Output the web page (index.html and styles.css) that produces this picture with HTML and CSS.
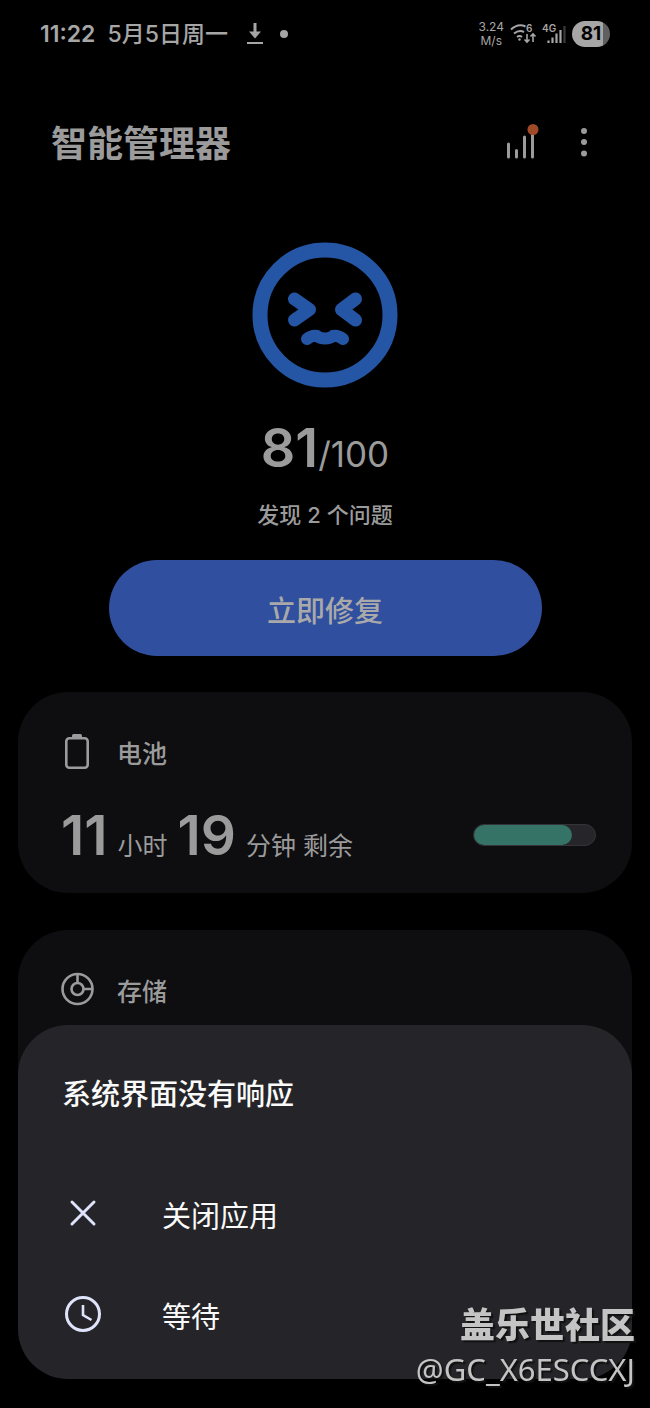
FILE: index.html
```html
<!DOCTYPE html>
<html lang="zh-CN">
<head>
    <meta charset="UTF-8">
    <meta name="viewport" content="width=device-width, initial-scale=1">
    <title>智能管理器</title>
    <link rel="stylesheet" href="styles.css">
</head>
<body>

<!-- 状态栏 -->
<div class="status-bar">
    <div class="status-left">
        <span class="clock">11:22</span>
        <span class="date">5月5日周一</span>
        <svg class="download" width="18" height="24" viewBox="0 0 18 24">
            <path d="M9 1v10" stroke="currentColor" stroke-width="3"/>
            <path d="M3 9.500h12L9 16.500z" fill="currentColor"/>
            <path d="M1 21h16" stroke="currentColor" stroke-width="2"/>
        </svg>
        <span class="dot"></span>
    </div>
    <div class="status-right">
        <div class="speed">3.24<br>M/s</div>
        <svg width="26" height="24" viewBox="0 0 26 24" fill="none" stroke="currentColor" stroke-width="2">
            <path d="M1 7.500Q8 1 15.500 4.500M4 11.500Q9 7.500 14 10M7 15Q9.500 13 12 15"/>
            <circle cx="9.500" cy="17.500" r="1.200" fill="currentColor" stroke="none"/>
            <path d="M17 12v8M14.500 17.500l2.500 2.500 2.500-2.500M23 20v-8M20.500 14.500L23 12l2.500 2.500" stroke-width="1.600"/>
            <text class="tiny" x="16" y="10">6</text>
        </svg>
        <svg width="24" height="26" viewBox="0 0 24 26" fill="none" stroke="currentColor" stroke-width="2.200">
            <text class="tiny" x="0" y="11">4G</text>
            <path d="M6.500 19.500V22M10.500 16.500V22M14.500 12.500V22M18.500 9v13"/>
            <path d="M22.500 5v17" opacity=".35"/>
        </svg>
        <div class="battery-pill">81</div>
    </div>
</div>

<!-- 标题 -->
<header class="header">
    <h1>智能管理器</h1>
    <div class="actions">
        <button class="icon-button" aria-label="使用统计">
            <svg width="34" height="42" viewBox="0 0 34 42">
                <path d="M3.500 21v13M11.500 27.500V34M19.500 14v20M27.500 12v22" stroke="currentColor" stroke-width="3" stroke-linecap="round"/>
                <circle cx="28" cy="6.500" r="5.500" fill="#a04a28"/>
            </svg>
        </button>
        <button class="icon-button" aria-label="更多选项">
            <svg width="10" height="42" viewBox="0 0 10 42" fill="currentColor">
                <circle cx="5" cy="8" r="3"/>
                <circle cx="5" cy="19" r="3"/>
                <circle cx="5" cy="30.500" r="3"/>
            </svg>
        </button>
    </div>
</header>

<main>
    <!-- 总评分 -->
    <section class="score">
        <svg width="146" height="146" viewBox="0 0 146 146" fill="none" stroke="#2556a5" stroke-linecap="round" stroke-linejoin="round">
            <circle cx="73" cy="73" r="65" stroke-width="15"/>
            <path d="M42.500 57L57.500 67.500 42.500 78M103.500 57L89.500 67.500l14 10.500" stroke-width="13"/>
            <path d="M55 97q5-4 10-3 3 2.500 8 2.500t8-2.500q5-1 10 3" stroke-width="12"/>
        </svg>
        <div class="points"><strong>81</strong><span>/100</span></div>
        <p>发现 2 个问题</p>
        <button class="fix-button">立即修复</button>
    </section>

    <!-- 电池 -->
    <section class="card">
        <h2>
            <svg width="34" height="38" viewBox="0 0 34 38" fill="none" stroke="currentColor">
                <rect x="5.300" y="6.300" width="21.400" height="29.400" rx="3" stroke-width="2.600"/>
                <path d="M11 6V3.500q0-1.500 1.500-1.500h7q1.500 0 1.500 1.500V6z" fill="currentColor" stroke="none"/>
            </svg>
            <span>电池</span>
        </h2>
        <div class="card-row">
            <div class="remaining">
                <strong>11</strong><span>小时</span><strong>19</strong><span>分钟 剩余</span>
            </div>
            <div class="level"><div class="level-fill" style="width: 81%"></div></div>
        </div>
    </section>

    <!-- 存储 -->
    <section class="card">
        <h2>
            <svg width="34" height="38" viewBox="0 0 34 38" fill="none" stroke="currentColor" stroke-width="2.600">
                <circle cx="16.500" cy="19" r="15"/>
                <circle cx="16.500" cy="19" r="6"/>
                <path d="M16.500 4v9M22.500 19h9"/>
            </svg>
            <span>存储</span>
        </h2>
    </section>
</main>

<!-- 无响应对话框 -->
<div class="dialog" role="dialog" aria-labelledby="dialog-title">
    <h2 id="dialog-title">系统界面没有响应</h2>
    <button class="dialog-option">
        <svg width="40" height="38" viewBox="0 0 40 38" fill="none" stroke="#dfe3fb" stroke-width="3" stroke-linecap="round">
            <path d="M10 7l22 22M32 7L10 29"/>
        </svg>
        关闭应用
    </button>
    <button class="dialog-option">
        <svg width="40" height="38" viewBox="0 0 40 38" fill="none" stroke="#dfe3fb" stroke-width="3">
            <circle cx="21" cy="18" r="16.500"/>
            <path d="M21 9v10l8.500 5" stroke-width="2.600"/>
        </svg>
        等待
    </button>
</div>

<div class="watermark">
    <strong>盖乐世社区</strong>
    <span>@GC_X6ESCCXJ</span>
</div>

</body>
</html>
```
FILE: styles.css
```css
* {
    box-sizing: border-box;
}
body {
    margin: 0;
    min-height: 100vh;
    background: #000;
    color: #9b9b9b;
    font-family: Inter, "Noto Sans CJK SC", sans-serif;
}
h1, h2, p {
    margin: 0;
}
button {
    padding: 0;
    border: none;
    background: none;
    color: inherit;
    font-family: inherit;
    cursor: pointer;
}
svg {
    display: block;
    flex: none;
    overflow: visible;
}

/* Status bar */
.status-bar {
    display: flex;
    justify-content: space-between;
    align-items: center;
    height: 68px;
    padding: 0 40px;
    color: #a6a6a6;
}
.status-left,
.status-right {
    display: flex;
    align-items: center;
}
.status-left {
    gap: 12px;
    font-size: 23px;
    font-weight: 600;
    line-height: 28px;
}
.date {
    font-weight: 500;
}
.download {
    margin-left: 6px;
}
.dot {
    width: 8px;
    height: 8px;
    margin-left: 4px;
    border-radius: 50%;
    background: #a6a6a6;
}
.status-right {
    gap: 6px;
}
.speed {
    font-size: 12px;
    line-height: 14px;
    text-align: center;
}
.tiny {
    font-size: 10px;
    font-weight: 600;
    fill: currentColor;
    stroke: none;
}
.battery-pill {
    width: 38px;
    border-radius: 13px;
    background: linear-gradient(90deg, #a6a6a6 81%, #606060 81%);
    color: #000;
    font-size: 19px;
    font-weight: 700;
    line-height: 26px;
    text-align: center;
}

/* Header */
.header {
    display: flex;
    justify-content: space-between;
    align-items: center;
    height: 152px;
    padding: 0 61px 0 51px;
}
.header h1 {
    font-size: 36px;
    font-weight: 700;
    line-height: 48px;
}
.actions {
    display: flex;
    gap: 40px;
}

/* Score */
.score {
    display: flex;
    flex-direction: column;
    align-items: center;
    padding: 22px 0 36px;
}
.points {
    margin-top: 28px;
    line-height: 64px;
    white-space: nowrap;
}
.points strong {
    font-size: 54px;
    font-weight: 600;
}
.points span {
    font-size: 35px;
    font-weight: 400;
}
.score p {
    margin-top: 6px;
    font-size: 22px;
    font-weight: 500;
    line-height: 32px;
}
.fix-button {
    width: calc(66% + 4px);
    height: 96px;
    margin-top: 29px;
    padding-top: 2px;
    border-radius: 48px;
    background: #304f9f;
    color: #a9a9a9;
    font-size: 29px;
    font-weight: 500;
}

/* Cards */
.card {
    min-height: 201px;
    margin: 0 18px 37px;
    padding: 40px 36px 0 43px;
    border-radius: 50px;
    background: #0e0e11;
}
.card h2 {
    display: flex;
    align-items: center;
    gap: 22px;
    font-size: 25px;
    font-weight: 500;
    line-height: 32px;
}
.card h2 span {
    padding-top: 6px;
}
.card-row {
    display: flex;
    justify-content: space-between;
    align-items: center;
    margin-top: 32px;
}
.remaining {
    display: flex;
    align-items: baseline;
    gap: 10px;
    font-size: 25px;
    font-weight: 400;
    line-height: 66px;
}
.remaining strong {
    font-size: 55px;
    font-weight: 600;
}
.level {
    width: 123px;
    height: 22px;
    margin-bottom: 12px;
    border: 1px solid #333338;
    border-radius: 11px;
    background: #25252a;
}
.level-fill {
    height: 100%;
    border-radius: 10px;
    background: #347366;
}

/* Dialog */
.dialog {
    position: fixed;
    right: 18px;
    bottom: 29px;
    left: 18px;
    padding: 48px 44px 14px;
    border-radius: 50px;
    background: #252529;
    color: #fafafa;
}
.dialog h2 {
    margin-bottom: 46px;
    font-size: 29px;
    font-weight: 500;
    line-height: 44px;
}
.dialog-option {
    display: flex;
    align-items: center;
    gap: 60px;
    width: 100%;
    height: 101px;
    font-size: 29px;
    font-weight: 400;
}

/* Watermark */
.watermark {
    position: fixed;
    right: 15px;
    bottom: 17px;
    display: flex;
    flex-direction: column;
    align-items: flex-end;
    color: #c4c4c4;
    font-family: "Noto Sans", "Noto Sans CJK SC", sans-serif;
    font-size: 31px;
    line-height: 44px;
    text-shadow: 2px 2px 1px #111;
}
.watermark strong {
    font-size: 35px;
    font-weight: 900;
}
```
